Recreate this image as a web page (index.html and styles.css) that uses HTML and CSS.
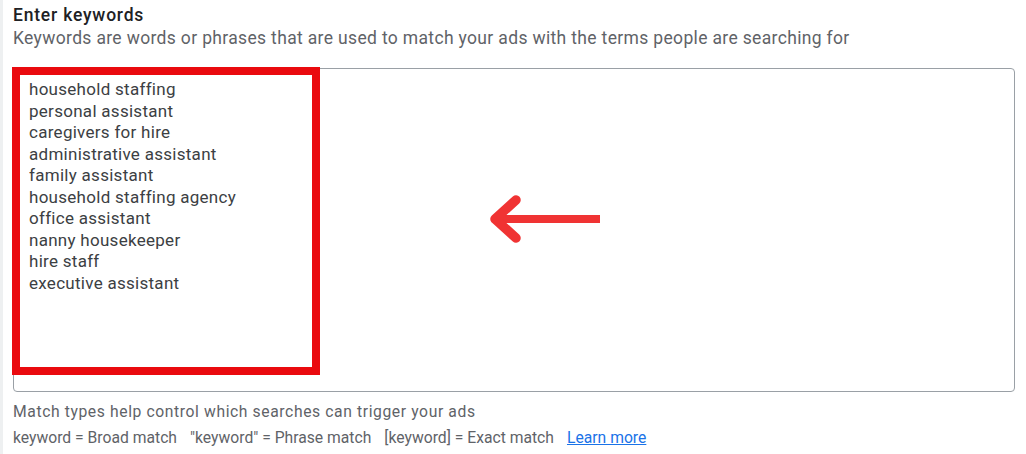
FILE: index.html
```html
<!DOCTYPE html>
<html>
<head>
<meta charset="utf-8">
<link rel="stylesheet" href="styles.css">
</head>
<body>
<div class="page">
  <div class="title">Enter keywords</div>
  <div class="subtitle">Keywords are words or phrases that are used to match your ads with the terms people are searching for</div>
  <div class="box">
    <div class="lines">
      <div>household staffing</div>
      <div>personal assistant</div>
      <div>caregivers for hire</div>
      <div>administrative assistant</div>
      <div>family assistant</div>
      <div>household staffing agency</div>
      <div>office assistant</div>
      <div>nanny housekeeper</div>
      <div>hire staff</div>
      <div>executive assistant</div>
    </div>
    <div class="highlight"></div>
    <svg class="arrow" width="130" height="60" viewBox="0 0 130 60">
      <path d="M10 30 H115" stroke="#f03333" stroke-width="8" fill="none"/>
      <path d="M31 11 L10 30 L31 49" stroke="#f03333" stroke-width="9.5" fill="none" stroke-linecap="round" stroke-linejoin="round"/>
    </svg>
  </div>
  <div class="help first">Match types help control which searches can trigger your ads</div>
  <div class="help second">
    <span>keyword = Broad match</span>
    <span>"keyword" = Phrase match</span>
    <span>[keyword] = Exact match</span>
    <a href="#">Learn more</a>
  </div>
</div>
</body>
</html>
```

FILE: styles.css
```css
html, body {
  margin: 0;
  padding: 0;
  background: #ffffff;
}
body {
  font-family: Roboto, "Liberation Sans", Arial, sans-serif;
  border-left: 3px solid #eef0f1;
  height: 454px;
  box-sizing: border-box;
  overflow: hidden;
}
.page {
  padding: 4px 0 0 10px;
  width: 1002px;
}
.title {
  font-size: 17.5px;
  font-weight: 500;
  color: #202124;
  line-height: 22px;
  letter-spacing: 0.8px;
}
.subtitle {
  font-size: 17.5px;
  color: #5f6368;
  line-height: 24px;
  letter-spacing: 0.34px;
}
.box {
  position: relative;
  margin-top: 18px;
  height: 324px;
  border: 1px solid #9aa0a6;
  border-radius: 4px;
  box-sizing: border-box;
}
.lines {
  padding: 10px 0 0 15px;
  font-size: 17px;
  line-height: 21.5px;
  color: #3c4043;
  letter-spacing: 0.28px;
}
.highlight {
  position: absolute;
  left: -2px;
  top: -2px;
  width: 308px;
  height: 308px;
  border: 8px solid #ea0a0f;
  box-sizing: border-box;
}
.arrow {
  position: absolute;
  left: 471px;
  top: 120px;
}
.help {
  font-size: 15.7px;
  color: #5f6368;
  line-height: 20px;
}
.help.first {
  margin-top: 10px;
  letter-spacing: 0.6px;
}
.help.second {
  margin-top: 6px;
  display: flex;
  gap: 13px;
}
.help a {
  color: #1a73e8;
  text-decoration: underline;
}
```
